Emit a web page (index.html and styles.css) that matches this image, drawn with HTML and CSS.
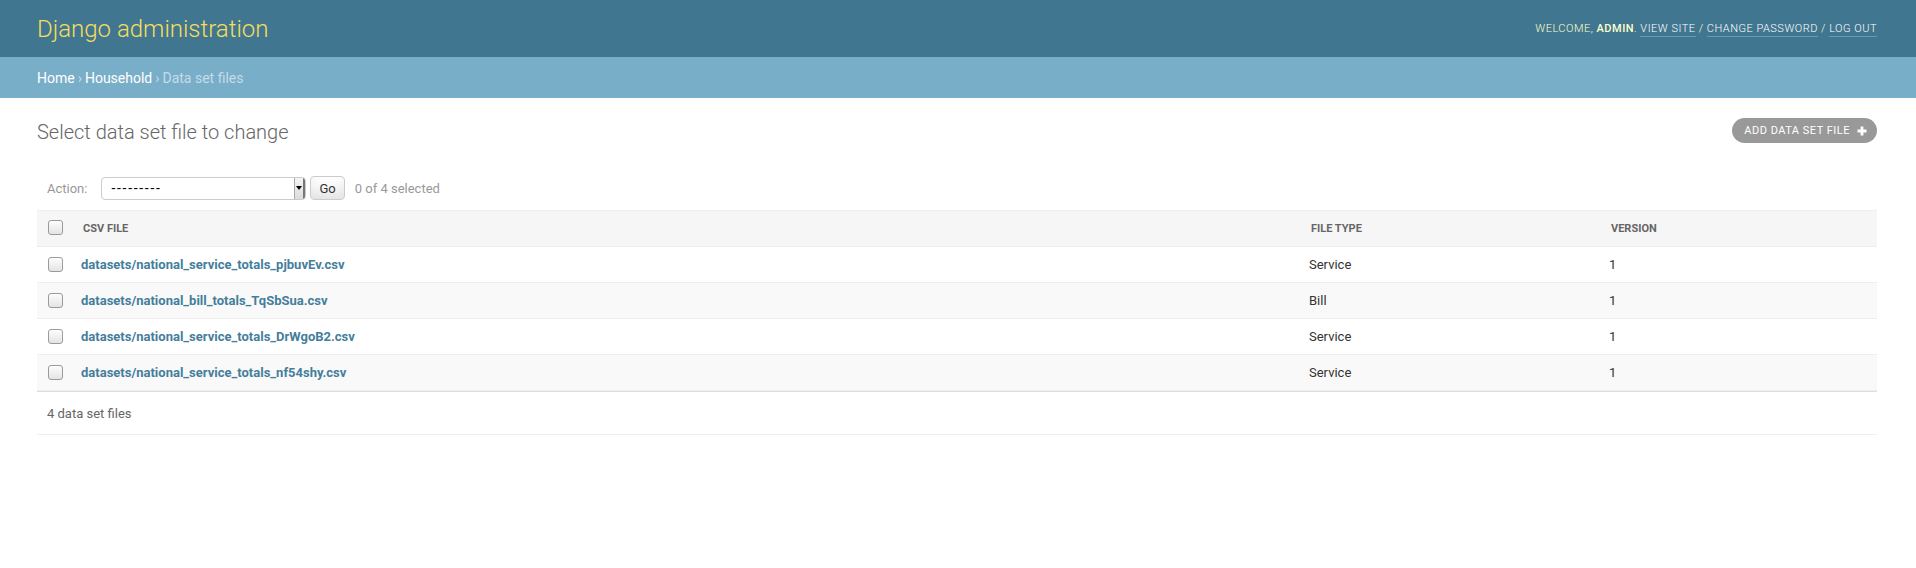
FILE: index.html
```html
<!DOCTYPE html>
<html lang="en">
<head>
<meta charset="utf-8">
<title>Select data set file to change | Django site admin</title>
<link rel="stylesheet" href="styles.css">
</head>
<body>
<div class="header">
  <h1 class="branding">Django administration</h1>
  <div class="user-tools">
    Welcome, <strong>admin</strong>. <a href="#">View site</a> / <a href="#">Change password</a> / <a href="#">Log out</a>
  </div>
</div>
<div class="breadcrumbs">
  <a href="#">Home</a><span class="sep">›</span><a href="#">Household</a><span class="sep">›</span><span>Data set files</span>
</div>
<div class="content">
  <div class="title-row">
    <h1 class="title">Select data set file to change</h1>
    <a class="addlink" href="#">Add data set file
      <svg class="plus" viewBox="0 0 10 10" width="10" height="10"><path d="M3.6 0.5h2.8v3.1h3.1v2.8H6.4v3.1H3.6V6.4H0.5V3.6h3.1z" fill="#fff"/></svg>
    </a>
  </div>
  <div class="actions">
    <span class="action-label">Action:</span>
    <div class="select"><span class="select-value">---------</span><span class="select-arrow"><span class="tri"></span></span></div>
    <button class="go">Go</button>
    <span class="counter">0 of 4 selected</span>
  </div>
  <table class="results">
    <thead>
      <tr>
        <th class="col-check"><span class="cb"></span></th>
        <th class="col-file">CSV file</th>
        <th class="col-type">File type</th>
        <th class="col-version">Version</th>
      </tr>
    </thead>
    <tbody>
      <tr class="row1">
        <td class="col-check"><span class="cb"></span></td>
        <th class="cell-link"><a href="#">datasets/national_service_totals_pjbuvEv.csv</a></th>
        <td class="cell-type">Service</td>
        <td class="cell-version">1</td>
      </tr>
      <tr class="row2">
        <td class="col-check"><span class="cb"></span></td>
        <th class="cell-link"><a href="#">datasets/national_bill_totals_TqSbSua.csv</a></th>
        <td class="cell-type">Bill</td>
        <td class="cell-version">1</td>
      </tr>
      <tr class="row1">
        <td class="col-check"><span class="cb"></span></td>
        <th class="cell-link"><a href="#">datasets/national_service_totals_DrWgoB2.csv</a></th>
        <td class="cell-type">Service</td>
        <td class="cell-version">1</td>
      </tr>
      <tr class="row2">
        <td class="col-check"><span class="cb"></span></td>
        <th class="cell-link"><a href="#">datasets/national_service_totals_nf54shy.csv</a></th>
        <td class="cell-type">Service</td>
        <td class="cell-version">1</td>
      </tr>
    </tbody>
  </table>
  <p class="paginator">4 data set files</p>
</div>
</body>
</html>
```
FILE: styles.css
```css
* { box-sizing: border-box; }
html, body { margin: 0; padding: 0; }
body {
  font-family: Roboto, "Liberation Sans", Arial, sans-serif;
  font-size: 14px;
  color: #333;
  background: #fff;
}
a { text-decoration: none; }

.header {
  height: 57px;
  background: #417690;
  padding: 0 39px 0 37px;
  display: flex;
  align-items: center;
  justify-content: space-between;
  color: #ffc;
}
.branding {
  margin: 0;
  font-size: 24px;
  font-weight: 300;
  color: #f5dd5d;
  line-height: 30px;
}
.user-tools {
  font-size: 11px;
  font-weight: 300;
  letter-spacing: 0.5px;
  text-transform: uppercase;
  line-height: 20px;
  padding-top: 1px;
}
.user-tools strong { font-weight: 500; color: #ffc; }
.user-tools a {
  color: #fff;
  border-bottom: 1px solid rgba(255,255,255,0.25);
  padding-bottom: 1px;
}

.breadcrumbs {
  height: 41px;
  background: #79aec8;
  padding: 0 37px;
  display: flex;
  align-items: center;
  font-size: 14px;
  color: #c4dce8;
}
.breadcrumbs a { color: #fff; }
.breadcrumbs .sep { margin: 0 3px; }

.content { padding: 20px 39px 0 37px; }

.title-row {
  display: flex;
  justify-content: space-between;
  align-items: flex-start;
  height: 25px;
}
.title {
  margin: 2px 0 0 0;
  font-size: 20px;
  font-weight: 300;
  color: #666;
  line-height: 24px;
}
.addlink {
  display: flex;
  align-items: center;
  height: 25px;
  padding: 0 10px 0 12px;
  background: #999;
  border-radius: 15px;
  color: #fff;
  font-size: 11px;
  font-weight: 400;
  text-transform: uppercase;
  letter-spacing: 0.5px;
}
.addlink .plus { margin-left: 7px; }

.actions {
  margin-top: 23px;
  padding: 10px;
  display: flex;
  align-items: center;
  height: 44px;
  color: #999;
  font-size: 13px;
}
.action-label { margin-right: 14px; }
.select {
  width: 205px;
  height: 23px;
  border: 1px solid #ccc;
  border-radius: 4px;
  display: flex;
  align-items: stretch;
  color: #000;
  font-size: 14px;
  padding-left: 9px;
  overflow: hidden;
}
.select-value { flex: 1; display: flex; align-items: center; letter-spacing: 1.7px; }
.select-arrow {
  width: 11px;
  background: linear-gradient(#f4f4f4, #dcdcdc);
  border-left: 1px solid #aaa;
  border-right: 2px solid #777;
  display: flex;
  align-items: center;
  justify-content: center;
}
.tri {
  width: 0; height: 0;
  border-left: 3px solid transparent;
  border-right: 3px solid transparent;
  border-top: 4px solid #000;
}
.go {
  margin-left: 4px;
  height: 24px;
  padding: 0 8px;
  font-family: inherit;
  font-size: 13px;
  color: #333;
  background: #fff;
  border: 1px solid #ccc;
  border-radius: 4px;
  box-shadow: 0 -15px 20px -10px rgba(0,0,0,0.15) inset;
  line-height: 1;
}
.counter { margin-left: 10px; }

.results {
  width: 100%;
  border-collapse: separate;
  border-spacing: 0;
}
.results thead th {
  height: 37px;
  background: #f6f6f6;
  border-top: 1px solid #eee;
  border-bottom: 1px solid #eee;
  font-size: 11px;
  font-weight: 700;
  color: #666;
  text-transform: uppercase;
  text-align: left;
  padding: 0 10px;
  vertical-align: middle;
  white-space: nowrap;
}
.results thead th.col-check { padding: 0 8px; text-align: center; }
.results .col-check { width: 36px; padding: 0 8px; text-align: center; }
.results .col-type { width: 300px; }
.results .col-version { width: 276px; }
.results tbody td, .results tbody th {
  height: 36px;
  border-bottom: 1px solid #eee;
  font-size: 13px;
  padding: 0 8px;
  vertical-align: middle;
  text-align: left;
  color: #333;
  font-weight: 400;
}
.results tbody th.cell-link { font-weight: 700; }
.results tbody th a { color: #447e9b; }
.row1 { background: #fff; }
.row2 { background: #f9f9f9; }

.cb {
  display: inline-block;
  width: 15px;
  height: 15px;
  border: 1px solid #9a9a9a;
  border-radius: 3px;
  background: linear-gradient(#fdfdfd, #e4e4e4);
  box-shadow: inset 0 1px 1px rgba(255,255,255,0.8);
  vertical-align: middle;
  margin-top: -3px;
}

.paginator {
  margin: 0;
  height: 44px;
  border-top: 1px solid #ddd;
  border-bottom: 1px solid #eee;
  padding: 0 10px;
  display: flex;
  align-items: center;
  font-size: 13px;
  color: #666;
}
```
